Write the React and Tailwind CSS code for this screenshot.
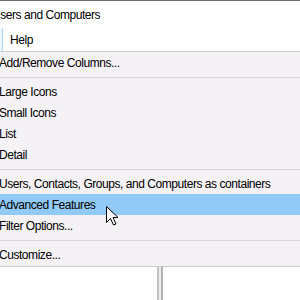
import React from 'react'

const Item = ({ label, active }) => (
  <div className={`h-[21px] flex items-center ${active ? 'bg-[#91c9f7]' : ''}`}>
    <span className="-ml-px whitespace-nowrap">{label}</span>
  </div>
)

const Sep = () => (
  <div className="h-[8px] flex items-center">
    <div className="h-px w-full bg-[#d8d6d8]" />
  </div>
)

export default function App() {
  return (
    <div className="relative w-[300px] h-[300px] overflow-hidden bg-white text-[12px] tracking-[-0.45px] text-black font-['Liberation_Sans',_Arial,_sans-serif]">
      <div className="h-px bg-[#6e6e6e]" />
      <div className="h-[27px] flex items-center">
        <span className="-ml-[8px] whitespace-nowrap">Users and Computers</span>
      </div>
      <div className="h-[23px] flex items-center">
        <div className="h-full w-[3px] bg-[#eef6fd] border-r border-[#a9d5f7]" />
        <span className="ml-[7px]">Help</span>
      </div>
      <div className="border-y border-[#cccccc] bg-[#f5f2f5] pb-[1px]">
        <Item label="Add/Remove Columns..." />
        <Sep />
        <Item label="Large Icons" />
        <Item label="Small Icons" />
        <Item label="List" />
        <Item label="Detail" />
        <Sep />
        <Item label="Users, Contacts, Groups, and Computers as containers" />
        <Item label="Advanced Features" active />
        <Item label="Filter Options..." />
        <Sep />
        <Item label="Customize..." />
      </div>
      <div className="flex h-[40px]">
        <div className="ml-[157px] w-[6px] h-full border-x-2 border-l-[#c2c2c2] border-r-[#b4b4b4] bg-[#ececec]" />
      </div>
      <svg className="absolute left-[106px] top-[206px]" width="13" height="20" viewBox="0 0 13 20">
        <path d="M0.5 0.5 L0.5 16.5 L4.5 12.5 L7.5 19 L10 18 L7 11.5 L12 11.5 Z" fill="#fff" stroke="#000" strokeWidth="1" strokeLinejoin="miter" />
      </svg>
    </div>
  )
}
